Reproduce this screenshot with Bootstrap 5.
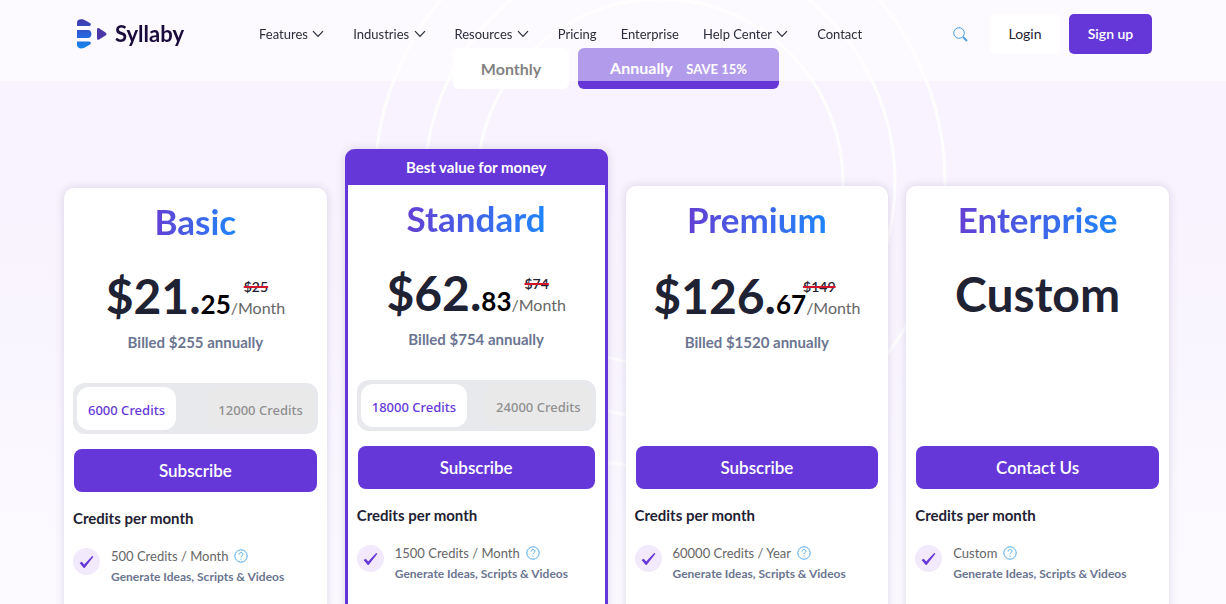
<!DOCTYPE html>
<html lang="en">
<head>
<meta charset="utf-8">
<meta name="viewport" content="width=device-width, initial-scale=1">
<title>Syllaby – Pricing</title>
<link href="https://cdn.jsdelivr.net/npm/bootstrap@5.3.0/dist/css/bootstrap.min.css" rel="stylesheet">
<style>
:root { --brand: #6637d8; --ink: #1f2233; --muted: #6b7591; }
body { font-family: Lato, "Liberation Sans", sans-serif; color: var(--ink); background: #f8f3fe; }
.page { position: relative; height: 100vh; overflow: hidden; background: linear-gradient(#f8f3fe 0, #f8f3fe 35%, #fcfaff 100%); }
.rings { position: absolute; left: 54%; top: -118px; width: 600px; height: 600px; margin-left: -302px; pointer-events: none; opacity: .9; }

.site-header { height: 81px; padding: 0 74px 13px 77px; background: rgba(255,255,255,.5); }
.brand-name { font-size: 22px; line-height: 28px; font-weight: 700; color: #1b0a3c; }
.main-menu { margin-left: 75px; gap: 24px; }
.main-menu a { font-size: 13px; line-height: 20px; color: #2b2d3c; text-decoration: none; white-space: nowrap; }
.main-menu .has-menu { padding-right: 5px; }
.main-menu svg { margin: -3px 0 0 1px; }
.search-btn { border: 0; background: none; padding: 0; line-height: 0; margin-right: 22px; }
.btn-login, .btn-signup { height: 40px; font-size: 14px; line-height: 20px; border: 0; border-radius: 5px; }
.btn-login { width: 70px; background: #fff; color: var(--ink); margin-right: 9px; }
.btn-signup { width: 83px; background: var(--brand); color: #fff; font-weight: 600; }

.pricing { position: relative; padding-top: 48px; }
.period { width: max-content; margin: 0 auto; padding: 0 6px 5px; gap: 9px; position: relative; left: 3px; }
.period button { height: 41px; border: 0; border-radius: 6px; font-weight: 700; font-size: 16px; line-height: 24px; }
.period .monthly { width: 116px; background: #fff; color: #000; }
.period .annually { width: 201px; background: var(--brand); color: #fff; }
.period small { font-size: 13px; margin-left: 10px; font-weight: 700; }

.plans { padding: 55px 57px 0 64px; }
.plans .row { --bs-gutter-x: 18px; }
.plan { background: #fff; border-radius: 10px; margin-top: 37px; box-shadow: 0 0 10px rgba(60,40,110,.16); height: 640px; }
.plan-low { margin-top: 39px; }
.plan-best { margin-top: 0; border: 3px solid var(--brand); border-top: 0; }
.best-label { margin: 0 -3px; height: 36px; line-height: 36px; background: var(--brand); color: #fff; font-size: 15px; font-weight: 700; border-radius: 10px 10px 0 0; text-align: center; }
.plan-body { padding: 12px 10px 0; }
.plan-top { height: 249px; display: flex; flex-direction: column; align-items: center; }
.plan-flat .plan-top { height: 248px; }
.plan-top h2 { font-size: 35px; line-height: 42px; font-weight: 700; margin: 0 0 30px; background: linear-gradient(90deg, #6340d4, #1f86fb); -webkit-background-clip: text; background-clip: text; color: transparent; }
.price { position: relative; font-size: 48px; line-height: 48px; font-weight: 700; margin: 0; white-space: nowrap; }
.price .cents { font-size: 26px; color: #000; }
.price .per { font-size: 16px; font-weight: 400; color: #666; }
.price del { position: absolute; right: 17px; top: 5px; font-size: 14px; line-height: 20px; font-weight: 600; text-decoration-color: #d4162c; text-decoration-thickness: 2px; }
.shifted .price del { right: 25px; }
.billed { font-size: 15px; line-height: 20px; font-weight: 700; color: var(--muted); margin: 0; }
.shifted .price { margin-top: 2px; }
.credit-switch { align-self: stretch; height: 51px; margin: auto -1px 15px; padding: 4px; background: #e8e9ed; border-radius: 12px; }
.credit-switch button { border: 0; border-radius: 12px; font-family: "Noto Sans", sans-serif; font-size: 13px; font-weight: 500; padding: 4px 11px 0; color: #8f8f8f; background: #e9e9ea; }
.credit-switch .active { background: #fff; color: var(--brand); }
.btn-plan { height: 43px; width: 100%; border-radius: 8px; border: 0; background: var(--brand); color: #fff; font-size: 17px; line-height: 24px; font-weight: 600; }
.plan h3 { font-size: 15px; line-height: 20px; font-weight: 700; margin: 16px 0 0 -1px; }
.feature { margin: 17px 0 0 -1px; gap: 11px; }
.check { flex: none; width: 27px; height: 27px; border-radius: 50%; background: #f2e9fc; display: grid; place-items: center; margin-top: 3px; }
.feature p { font-size: 13px; line-height: 22px; margin: 0; color: #666; }
.feature .note { font-size: 12px; font-weight: 700; line-height: 20px; color: var(--muted); }
.feature svg.tip { margin: -4px 0 0 6px; }
</style>
</head>
<body>
<svg width="0" height="0" class="position-absolute" aria-hidden="true">
  <symbol id="chev" viewBox="0 0 12 8"><path d="M1 1.200 6 6.400 11 1.200" fill="none" stroke="#2b2d3c" stroke-width="1.200"/></symbol>
  <symbol id="tick" viewBox="0 0 15 14"><path d="M.6 8.100 2.800 6.700 5.200 9.600 13.200 1 14.400 1.700 5.600 13 4.800 13Z" fill="#6637d8"/></symbol>
  <symbol id="help" viewBox="0 0 14 14"><circle cx="7" cy="7" r="6.200" fill="none" stroke="#54a9e8" stroke-width="1"/><path d="M5.100 5.500c0-2.600 3.800-2.600 3.800-.2 0 1.500-1.900 1.500-1.900 3M7 9.600v1.100" fill="none" stroke="#54a9e8" stroke-width="1"/></symbol>
</svg>
<header class="site-header fixed-top d-flex align-items-center">
  <a href="#" class="d-flex align-items-center text-decoration-none">
    <svg width="30" height="30" viewBox="0 0 30 30" aria-hidden="true">
      <defs><linearGradient id="lg" gradientUnits="userSpaceOnUse" x1="0" y1="0" x2="0" y2="30"><stop offset="0" stop-color="#4338aa"/><stop offset=".5" stop-color="#2a5fd8"/><stop offset="1" stop-color="#1689ec"/></linearGradient></defs>
      <path fill="url(#lg)" d="M0 7V4C0 .4 3.500-.2 7 .8L13 4c1.500 1 1 3-1 3ZM0 11H11c4.600 0 4.600 8 0 8H0ZM0 22.500H12c2 0 2.500 2 1 3L7 29C3.500 30.200 0 29 0 26Z"/>
      <path fill="#4b37a8" d="M20 10.500c0-1.600 1-1.900 2-1.300l6.500 4.300c1.300.9 1.300 2 0 2.900L22 20.500c-1 .6-2 .3-2-1.300Z"/>
    </svg>
    <span class="brand-name ms-2">Syllaby</span>
  </a>
  <nav class="main-menu d-flex align-items-center">
    <a href="#" class="has-menu">Features <svg width="12" height="8"><use href="#chev"/></svg></a>
    <a href="#" class="has-menu">Industries <svg width="12" height="8"><use href="#chev"/></svg></a>
    <a href="#" class="has-menu">Resources <svg width="12" height="8"><use href="#chev"/></svg></a>
    <a href="#">Pricing</a>
    <a href="#">Enterprise</a>
    <a href="#" class="has-menu">Help Center <svg width="12" height="8"><use href="#chev"/></svg></a>
    <a href="#">Contact</a>
  </nav>
  <div class="d-flex align-items-center ms-auto">
    <button class="search-btn" aria-label="Search"><svg width="15" height="15" viewBox="0 0 15 15" fill="none" stroke="#4b9fe6"><circle cx="6" cy="6" r="5.300"/><path d="m10 10 4 4" stroke-width="1.800"/></svg></button>
    <button class="btn btn-login p-0">Login</button>
    <button class="btn btn-signup p-0">Sign up</button>
  </div>
</header>

<main class="page">
  <svg class="rings" viewBox="0 0 600 600" fill="none" stroke="#fff" stroke-width="3" aria-hidden="true"><circle cx="300" cy="300" r="183"/><circle cx="300" cy="300" r="235"/><circle cx="300" cy="300" r="285"/></svg>
  <section class="pricing">
    <div class="period d-flex">
      <button class="monthly">Monthly</button>
      <button class="annually">Annually <small>SAVE 15%</small></button>
    </div>
    <div class="plans">
      <div class="row row-cols-2 row-cols-lg-4">
        <div class="col">
          <article class="plan plan-low"><div class="plan-body">
            <div class="plan-top">
              <h2>Basic</h2>
              <p class="price">$21.<span class="cents">25</span><span class="per">/Month</span><del>$25</del></p>
              <p class="billed">Billed $255 annually</p>
              <div class="credit-switch d-flex justify-content-between"><button class="active">6000 Credits</button><button>12000 Credits</button></div>
            </div>
            <button class="btn btn-plan p-0">Subscribe</button>
            <h3>Credits per month</h3>
            <div class="feature d-flex"><span class="check"><svg width="15" height="14"><use href="#tick"/></svg></span><div><p>500 Credits / Month<svg class="tip" width="14" height="14"><use href="#help"/></svg></p><p class="note">Generate Ideas, Scripts &amp; Videos</p></div></div>
          </div></article>
        </div>
        <div class="col">
          <article class="plan plan-best"><div class="best-label">Best value for money</div><div class="plan-body">
            <div class="plan-top">
              <h2>Standard</h2>
              <p class="price">$62.<span class="cents">83</span><span class="per">/Month</span><del>$74</del></p>
              <p class="billed">Billed $754 annually</p>
              <div class="credit-switch d-flex justify-content-between"><button class="active">18000 Credits</button><button>24000 Credits</button></div>
            </div>
            <button class="btn btn-plan p-0">Subscribe</button>
            <h3>Credits per month</h3>
            <div class="feature d-flex"><span class="check"><svg width="15" height="14"><use href="#tick"/></svg></span><div><p>1500 Credits / Month<svg class="tip" width="14" height="14"><use href="#help"/></svg></p><p class="note">Generate Ideas, Scripts &amp; Videos</p></div></div>
          </div></article>
        </div>
        <div class="col">
          <article class="plan plan-flat shifted"><div class="plan-body">
            <div class="plan-top">
              <h2>Premium</h2>
              <p class="price">$126.<span class="cents">67</span><span class="per">/Month</span><del>$149</del></p>
              <p class="billed">Billed $1520 annually</p>
            </div>
            <button class="btn btn-plan p-0">Subscribe</button>
            <h3>Credits per month</h3>
            <div class="feature d-flex"><span class="check"><svg width="15" height="14"><use href="#tick"/></svg></span><div><p>60000 Credits / Year<svg class="tip" width="14" height="14"><use href="#help"/></svg></p><p class="note">Generate Ideas, Scripts &amp; Videos</p></div></div>
          </div></article>
        </div>
        <div class="col">
          <article class="plan plan-flat"><div class="plan-body">
            <div class="plan-top">
              <h2>Enterprise</h2>
              <p class="price">Custom</p>
            </div>
            <button class="btn btn-plan p-0">Contact Us</button>
            <h3>Credits per month</h3>
            <div class="feature d-flex"><span class="check"><svg width="15" height="14"><use href="#tick"/></svg></span><div><p>Custom<svg class="tip" width="14" height="14"><use href="#help"/></svg></p><p class="note">Generate Ideas, Scripts &amp; Videos</p></div></div>
          </div></article>
        </div>
      </div>
    </div>
  </section>
</main>
<script src="https://cdn.jsdelivr.net/npm/bootstrap@5.3.0/dist/js/bootstrap.bundle.min.js"></script>
</body>
</html>
